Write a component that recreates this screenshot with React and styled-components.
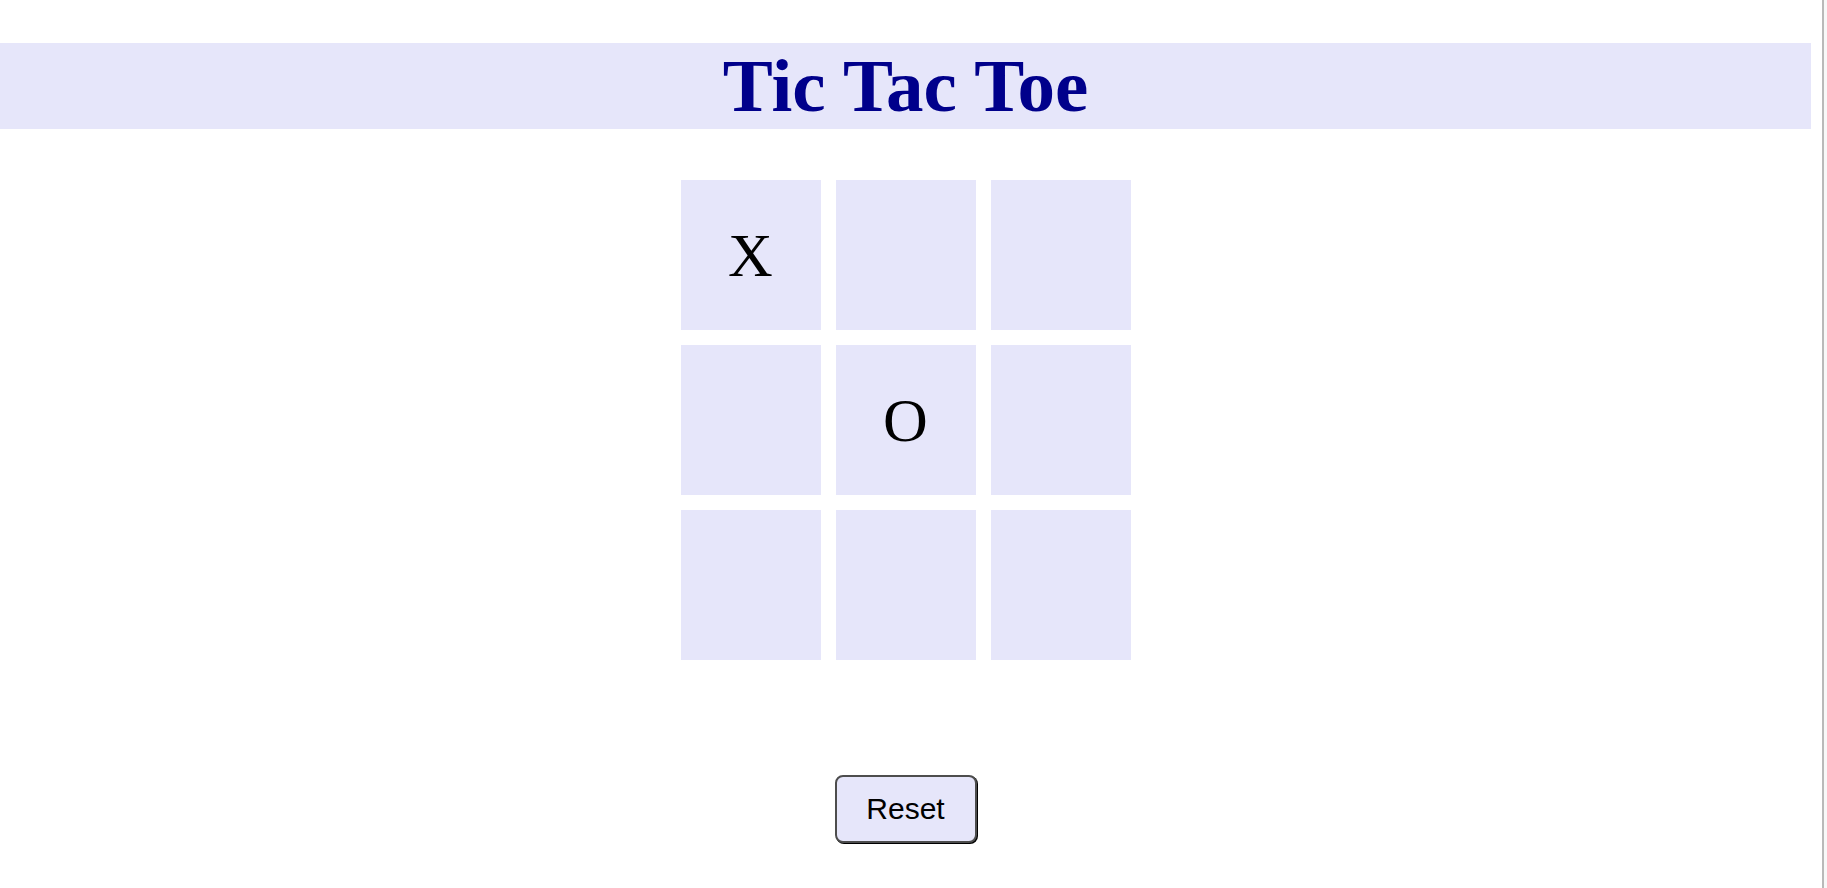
import React, { useState } from "react";
import styled, { createGlobalStyle } from "styled-components";

const GlobalStyle = createGlobalStyle`
  html, body {
    margin: 0;
    padding: 0;
    background: #ffffff;
  }
  body {
    font-family: "Liberation Serif", "Times New Roman", serif;
  }
`;

const Frame = styled.div`
  display: flex;
  min-height: 888px;
`;

const Page = styled.div`
  flex: 0 0 1811px;
  display: flex;
  flex-direction: column;
  align-items: center;
  padding-top: 43px;
`;

const ScrollTrack = styled.div`
  flex: 1;
  display: flex;
  justify-content: flex-end;
  background: #ffffff;
`;

const ScrollEdge = styled.div`
  width: 3px;
  border-left: 2px solid #b9b9b9;
  background: #f8f8f8;
`;

const TitleBar = styled.h1`
  align-self: stretch;
  margin: 0;
  background: #e6e6fa;
  color: #00008b;
  font-family: "Liberation Serif", "Times New Roman", serif;
  font-weight: bold;
  font-size: 75px;
  line-height: 86px;
  text-align: center;
`;

const Board = styled.div`
  display: grid;
  grid-template-columns: repeat(3, 140px);
  grid-template-rows: repeat(3, 150px);
  gap: 15px;
  margin-top: 51px;
`;

const Cell = styled.div`
  display: flex;
  align-items: center;
  justify-content: center;
  background: #e6e6fa;
  color: #000;
  font-family: "Liberation Serif", "Times New Roman", serif;
  font-size: 62px;
  cursor: pointer;
  user-select: none;
`;

const ResetButton = styled.button`
  margin-top: 115px;
  width: 142px;
  height: 68px;
  background: #e6e6fa;
  color: #000;
  border: 2px solid #4d4d4d;
  border-radius: 8px;
  box-shadow: 1px 1px 0 #000;
  font-family: "Liberation Sans", Arial, sans-serif;
  font-size: 30px;
  cursor: pointer;
`;

const initial = ["X", "", "", "", "O", "", "", "", ""];

export default function App() {
  const [cells, setCells] = useState(initial);
  const [turn, setTurn] = useState("X");

  const play = (i) => {
    if (cells[i]) return;
    const next = cells.slice();
    next[i] = turn;
    setCells(next);
    setTurn(turn === "X" ? "O" : "X");
  };

  return (
    <>
      <GlobalStyle />
      <Frame>
        <Page>
          <TitleBar>Tic Tac Toe</TitleBar>
          <Board>
            {cells.map((v, i) => (
              <Cell key={i} onClick={() => play(i)}>
                {v}
              </Cell>
            ))}
          </Board>
          <ResetButton
            onClick={() => {
              setCells(Array(9).fill(""));
              setTurn("X");
            }}
          >
            Reset
          </ResetButton>
        </Page>
        <ScrollTrack>
          <ScrollEdge />
        </ScrollTrack>
      </Frame>
    </>
  );
}
